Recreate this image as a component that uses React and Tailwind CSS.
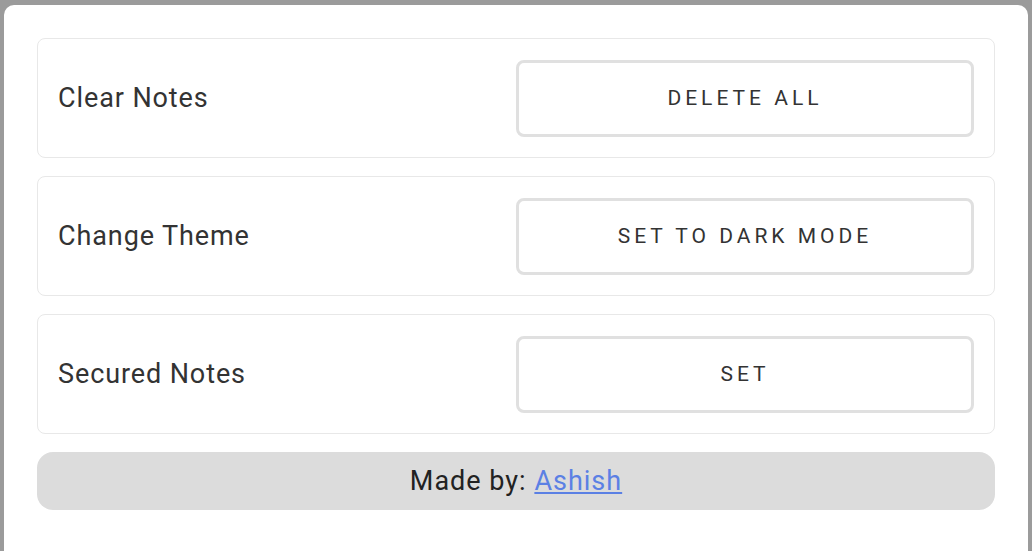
export default function App() {
  const rows = [
    { label: "Clear Notes", action: "DELETE ALL" },
    { label: "Change Theme", action: "SET TO DARK MODE" },
    { label: "Secured Notes", action: "SET" },
  ];
  return (
    <div
      className="w-[1032px] h-[551px] overflow-hidden bg-[#9b9b9b] pt-[5px] px-[4px]"
      style={{ fontFamily: "Roboto, 'Liberation Sans', sans-serif" }}
    >
      <div className="bg-white rounded-t-[10px] h-[560px] px-[33px] pt-[33px] flex flex-col gap-[18px]">
        {rows.map((r) => (
          <div
            key={r.label}
            className="h-[120px] border border-[#e8e8e8] rounded-[8px] px-[20px] grid grid-cols-2 items-center"
          >
            <div className="text-[27px] tracking-[0.9px] text-[#333333] leading-none">{r.label}</div>
            <button className="h-[77px] border-[3px] border-[#e0e0e0] rounded-[8px] bg-white text-[21px] tracking-[4px] text-[#333333] leading-none">
              {r.action}
            </button>
          </div>
        ))}
        <div className="h-[58px] bg-[#dcdcdc] rounded-[16px] flex items-center justify-center text-[27px] tracking-[1px] text-[#222222]">
          <span>
            Made by:{" "}
            <a href="#" className="text-[#5b80e4] underline">
              Ashish
            </a>
          </span>
        </div>
      </div>
    </div>
  );
}
